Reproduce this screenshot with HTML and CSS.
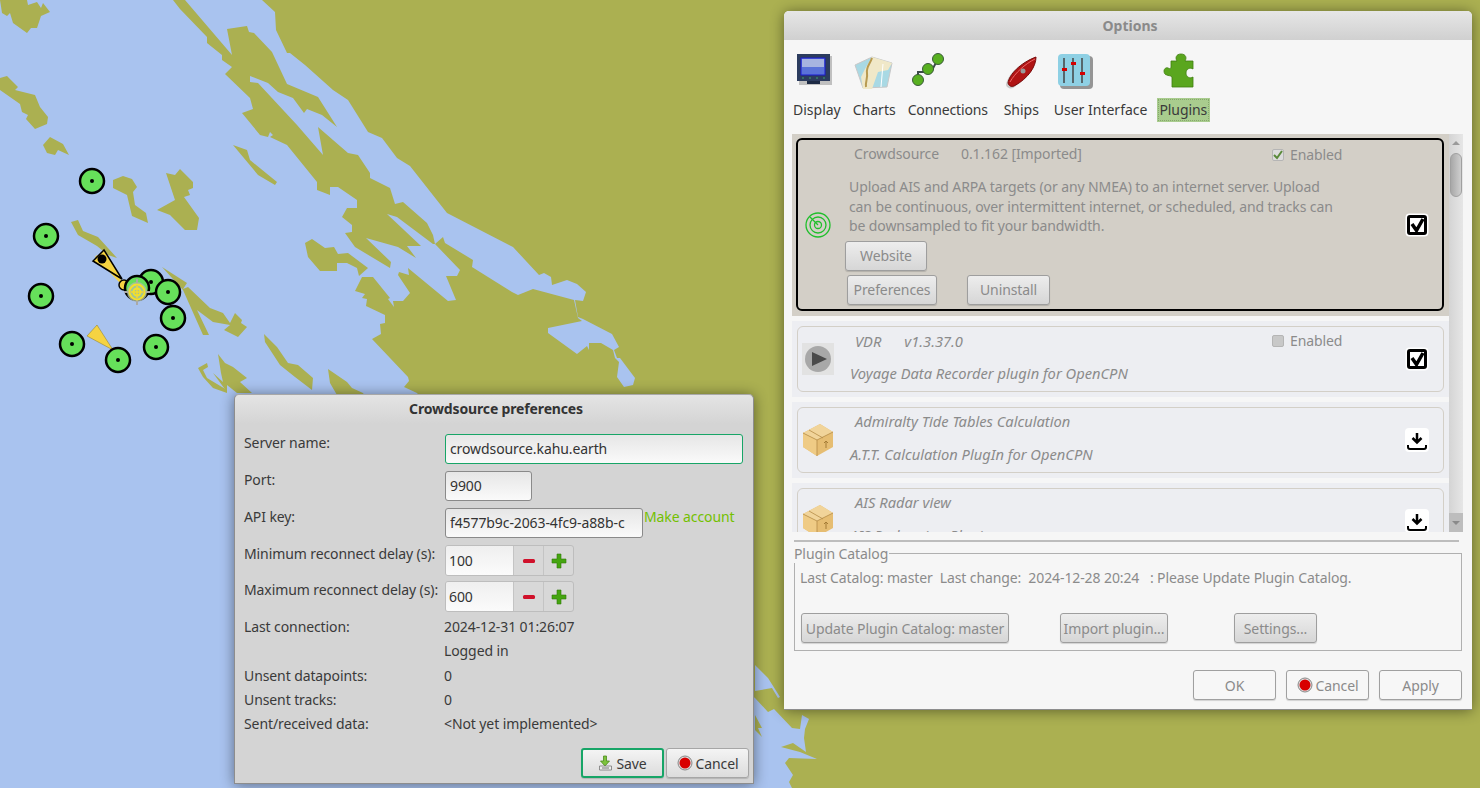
FILE: index.html
```html
<!DOCTYPE html>
<html lang="en">
<head>
  <meta charset="UTF-8" />
  <title>OpenCPN options</title>
  <link rel="stylesheet" href="styles.css">
</head>
<body>
  <!-- chart canvas -->
  <svg class="chart" width="1480" height="788" viewBox="0 0 1480 788">
    <g class="water">
      <polygon points="262,0 275,12 276,30 287,53 290,53 305,65 333,90 348,100 368,132 382,138 397,158 410,166 447,213 513,247 539,275 544,273 551,277 552,285 567,280 577,284 586,292 583,301 575,300 578,317 583,319 612,334 619,347 614,350 617,358 620,358 635,378 633,385 624,387 617,377 619,362 615,358 613,350 601,343 589,343 589,350 587,346 577,354 548,333 548,328 582,321 578,318 574,300 533,289 518,295 512,292 472,267 473,260 445,243 443,237 435,244 433,235 427,223 403,202 395,204 390,188 370,178 370,173 358,155 348,153 318,127 323,155 297,125 258,83 250,82 250,76 268,83 278,92 293,98 304,113 307,109 322,115 337,127 318,97 287,84 272,52 254,33 249,32 247,26 227,29 232,55 185,0" />
      <polygon points="0,0 173,0 180,9 207,37 207,43 222,55 222,60 232,67 225,74 250,98 253,109 242,113 260,135 268,137 270,132 273,135 270,137 287,145 317,182 317,190 330,195 330,187 338,187 357,200 357,208 347,208 342,217 352,225 352,232 345,233 355,247 390,268 391,262 366,238 398,247 416,258 407,246 421,246 387,214 397,217 433,244 435,244 460,270 457,276 446,276 456,300 448,301 408,268 409,275 399,272 398,275 410,293 403,301 393,301 394,307 388,299 390,298 373,277 362,277 355,291 365,294 362,298 367,299 366,306 385,315 385,323 380,324 381,334 372,339 408,377 409,381 404,387 417,393 500,500 755,698 768,712 774,709 792,728 800,729 802,715 809,719 805,729 804,738 806,752 793,743 781,747 800,752 817,759 789,758 785,763 793,775 789,782 792,788 0,788" />
      <polygon points="755,665 768,678 780,697 778,698 772,688 755,691" />
    </g>
    <g class="land">
      <polygon points="0,0 2,13 7,16 10,13 13,23 27,33 31,28 37,28 41,16 50,12 43,3 41,8 37,2 28,5 27,0" />
      <polygon points="0,78 7,76 18,87 15,90 35,95 40,107 48,117 47,124 35,129 26,119 28,115 22,112 20,104 0,90" />
      <polygon points="50,137 63,144 69,155 58,150 55,155 47,153 43,145" />
      <polygon points="113,180 123,176 132,179 137,187 133,192 135,205 146,213 148,223 132,216 127,195 113,188" />
      <polygon points="166,173 175,175 180,169 193,182 193,188 188,190 190,195 184,197 199,218 197,230 185,230 170,215 157,210 175,200" />
      <polygon points="233,145 247,150 250,160 277,182 275,185 258,175" />
      <polygon points="305,243 312,239 325,248 334,247 338,254 348,253 368,268 359,276 357,268 347,263 337,263 337,271 320,271 308,257" />
      <polygon points="71,222 78,220 83,231 98,237 117,258 108,255 97,246 78,235" />
      <polygon points="162,267 187,283 183,289 188,287 210,308 223,313 230,323 235,313 242,320 241,323 247,327 238,337 224,330 230,325 213,322 197,310 209,335 203,335 183,290" />
      <polygon points="264,334 277,347 288,363 298,365 313,378 312,390 295,377 280,365 265,342" />
      <polygon points="328,369 347,382 352,388 363,393 367,400 337,395 330,383" />
      <polygon points="218,354 225,363 233,367 247,378 240,382 252,393 237,393 227,385 227,392 213,373 223,382 221,373" />
      <polygon points="198,368 207,363 208,367 203,370 207,378 227,390 227,393 213,388 203,377" />
      <polygon points="755,715 762,728 758,728 762,737 755,730" />
    </g>
    <g class="boats">
      <line x1="96" y1="256" x2="124" y2="285" class="heading" />
      <polygon points="104,250 93,261 122,279" class="boat" />
      <circle cx="102" cy="259" r="4.5" />
      <circle cx="124" cy="285" r="5" class="boat" />
      <polygon points="97,325 87,336 113,350" class="boat thin" />
    </g>
    <g class="targets">
      <circle cx="151" cy="282" r="12" />
      <circle cx="137" cy="288" r="12" />
      <circle cx="168" cy="292" r="12" />
      <circle cx="92" cy="181" r="12" />
      <circle cx="46" cy="236" r="12" />
      <circle cx="41" cy="296" r="12" />
      <circle cx="72" cy="344" r="12" />
      <circle cx="118" cy="360" r="12" />
      <circle cx="156" cy="347" r="12" />
      <circle cx="173" cy="318" r="12" />
    </g>
    <g class="dots">
      <circle cx="151" cy="282" r="2" />
      <circle cx="168" cy="292" r="2" />
      <circle cx="92" cy="181" r="2" />
      <circle cx="46" cy="236" r="2" />
      <circle cx="41" cy="296" r="2" />
      <circle cx="72" cy="344" r="2" />
      <circle cx="118" cy="360" r="2" />
      <circle cx="156" cy="347" r="2" />
      <circle cx="173" cy="318" r="2" />
    </g>
    <g class="ownship">
      <circle cx="137" cy="292" r="10" class="halo" />
      <path d="M137 279v26M124 292h26" class="cross" />
      <circle cx="137" cy="292" r="7.5" class="ring" />
      <circle cx="137" cy="292" r="3.5" class="ring" />
      <path d="M137 286v12M131 292h12" class="ring thin-ring" />
    </g>
  </svg>

  <!-- preferences dialog -->
  <div class="window prefs">
    <div class="titlebar prefs-title">Crowdsource preferences</div>
    <div class="prefs-form">
      <label class="lbl">Server name:</label>
      <div class="input focus wide">crowdsource.kahu.earth</div>

      <label class="lbl">Port:</label>
      <div class="input port">9900</div>

      <label class="lbl">API key:</label>
      <div class="key-row">
        <div class="input key"><span class="clip">f4577b9c-2063-4fc9-a88b-c</span></div>
        <a class="link">Make account</a>
      </div>

      <label class="lbl">Minimum reconnect delay (s):</label>
      <div class="spin">
        <span class="spin-val">100</span>
        <span class="spin-btn"><svg width="14" height="14" viewBox="0 0 14 14"><rect x="1" y="5" width="12" height="4" rx="1.5" fill="#d0112b" /></svg></span>
        <span class="spin-btn"><svg width="16" height="16" viewBox="0 0 16 16"><path d="M6 1h4v5h5v4h-5v5H6v-5H1V6h5z" fill="#45a510" stroke="#2f7a08" stroke-width=".6" /></svg></span>
      </div>

      <label class="lbl">Maximum reconnect delay (s):</label>
      <div class="spin">
        <span class="spin-val">600</span>
        <span class="spin-btn"><svg width="14" height="14" viewBox="0 0 14 14"><rect x="1" y="5" width="12" height="4" rx="1.5" fill="#d0112b" /></svg></span>
        <span class="spin-btn"><svg width="16" height="16" viewBox="0 0 16 16"><path d="M6 1h4v5h5v4h-5v5H6v-5H1V6h5z" fill="#45a510" stroke="#2f7a08" stroke-width=".6" /></svg></span>
      </div>
    </div>
    <div class="prefs-info">
      <span>Last connection:</span><span>2024-12-31 01:26:07</span>
      <span></span><span>Logged in</span>
      <span>Unsent datapoints:</span><span>0</span>
      <span>Unsent tracks:</span><span>0</span>
      <span>Sent/received data:</span><span>&lt;Not yet implemented&gt;</span>
    </div>
    <div class="prefs-actions">
      <button class="btn focus-btn">
        <svg width="15" height="16" viewBox="0 0 15 16"><path d="M5.500 1h3v5h3L7 11 2.500 6h3z" fill="#7cc23c" stroke="#4b8a1c" stroke-width=".8" /><path d="M1.500 11h12v4h-12z" fill="#eee" stroke="#777" stroke-width=".8" /><path d="M4 13h7" stroke="#777" /></svg>
        Save
      </button>
      <button class="btn">
        <svg class="stop" width="16" height="16" viewBox="0 0 16 16"><circle cx="8" cy="8" r="7" fill="#ddd" stroke="#888" /><circle cx="8" cy="8" r="5.500" fill="#d80000" /></svg>
        Cancel
      </button>
    </div>
  </div>

  <!-- options dialog -->
  <div class="window options">
    <div class="titlebar options-title">Options</div>

    <div class="toolbar">
      <div class="tool tool-display">
        <svg width="38" height="38" viewBox="0 0 38 38">
          <rect x="3" y="3" width="33" height="29" fill="#8a8a8a" opacity=".5" />
          <rect x="1" y="1" width="33" height="27" fill="#2c3c5e" />
          <rect x="5" y="5" width="24" height="17" fill="#5a72d8" stroke="#1b1bd0" />
          <rect x="6" y="6" width="22" height="8" fill="#a7b4e0" />
          <path d="M6 25h2M13 25h2M20 25h2M27 25h2" stroke="#3fa06a" />
          <rect x="11" y="28" width="13" height="3" fill="#1d2a44" />
        </svg>
        <span>Display</span>
      </div>
      <div class="tool">
        <svg width="42" height="38" viewBox="0 0 42 38">
          <path d="M2 12 19 4l20 6-5 24-24 1z" fill="#a9d9e4" stroke="#c8c8c8" />
          <path d="M19 4l20 6-4 7-10 2-6 17h-9L8 24l4-8z" fill="#f0e8c8" />
          <path d="M19 5c-2 6-6 9-5 15s-2 9-1 14" stroke="#b89a50" fill="none" stroke-width="2" />
          <path d="M30 11 28 34" stroke="#fff" />
        </svg>
        <span>Charts</span>
      </div>
      <div class="tool tool-conn">
        <svg width="38" height="38" viewBox="0 0 38 38">
          <path d="M7 27v-8h13l7-13" stroke="#3c4a4a" stroke-width="2" fill="none" />
          <circle cx="7" cy="27" r="5.500" fill="#58b020" stroke="#3a5a3a" />
          <circle cx="17" cy="16" r="5.500" fill="#58b020" stroke="#3a5a3a" />
          <circle cx="27" cy="6" r="5.500" fill="#58b020" stroke="#3a5a3a" />
        </svg>
        <span>Connections</span>
      </div>
      <div class="tool tool-ships">
        <svg width="38" height="38" viewBox="0 0 38 38">
          <path d="M4 31C5 22 16 10 33 3c1 9-7 21-22 31-3 1-6 0-7-3z" fill="#aaa" opacity=".6" transform="translate(-1 1)" />
          <path d="M5 30C6 22 17 10 33 4c0 9-7 21-22 29-3 1-5 0-6-3z" fill="#b01414" stroke="#7a0a0a" />
          <path d="M7 29C12 20 22 11 32 6" stroke="#e66" fill="none" />
          <circle cx="20" cy="18" r="2.500" fill="#999" />
        </svg>
        <span>Ships</span>
      </div>
      <div class="tool tool-ui">
        <svg width="38" height="38" viewBox="0 0 38 38">
          <rect x="3" y="3" width="33" height="33" rx="4" fill="#555" opacity=".6" />
          <rect x="1" y="1" width="32" height="32" rx="4" fill="#8ed0e4" />
          <path d="M7 5v25M16 5v25M25 5v25" stroke="#444" stroke-width="1.500" />
          <rect x="5" y="15" width="5" height="3" fill="#d40000" />
          <rect x="14" y="9" width="5" height="3" fill="#d40000" />
          <rect x="23" y="19" width="5" height="3" fill="#d40000" />
        </svg>
        <span>User Interface</span>
      </div>
      <div class="tool tool-active">
        <svg width="38" height="38" viewBox="0 0 38 38">
          <path d="M8 8h6c-2-3-1-7 4-7s6 4 4 7h8v8c-3-2-7 0-7 4s4 6 7 4v10H9V24c-2-2-4-1-5-2-2 0-3-2-3-4s2-4 4-3c2 1 3 1 3-1z" fill="#5aa61e" stroke="#3f7d10" stroke-width=".8" />
        </svg>
        <span class="tool-label">Plugins</span>
      </div>
    </div>

    <div class="plugin-panel">
      <div class="plugin-list">
        <div class="band band-sel">
          <div class="card card-sel">
            <div class="card-icon radar">
              <svg width="28" height="28" viewBox="0 0 28 28" fill="none" stroke="#1fbf2b" stroke-width="1.300"><circle cx="14" cy="14" r="12" /><circle cx="14" cy="14" r="8" /><circle cx="14" cy="14" r="3.500" /><path d="M14 14 6 6" /></svg>
            </div>
            <div class="card-main">
              <div class="card-head">
                <span class="name">Crowdsource</span><span class="ver">0.1.162 [Imported]</span>
                <span class="enabled"><span class="cb on"><svg width="10" height="10" viewBox="0 0 10 10"><path d="M1 5l3 3 5-7" fill="none" stroke="#5a8a3a" stroke-width="2" /></svg></span>Enabled</span>
              </div>
              <p class="desc">Upload AIS and ARPA targets (or any NMEA) to an internet server. Upload can be continuous, over intermittent internet, or scheduled, and tracks can be downsampled to fit your bandwidth.</p>
              <div class="card-btns">
                <button class="btn dim web">Website</button>
              </div>
              <div class="card-btns second">
                <button class="btn dim pref">Preferences</button>
                <button class="btn dim uninstall">Uninstall</button>
              </div>
            </div>
            <div class="card-act">
              <span class="check-icon"><svg width="24" height="24" viewBox="0 0 24 24"><rect x=".5" y=".5" width="23" height="23" rx="4" fill="#fff" /><rect x="3.500" y="3.500" width="17" height="17" rx="1.500" fill="#fff" stroke="#000" stroke-width="3" /><path d="M7 11l4.500 6.500L18 6" fill="none" stroke="#000" stroke-width="3.500" /></svg></span>
            </div>
          </div>
        </div>

        <div class="band">
          <div class="card">
            <div class="card-icon">
              <svg width="32" height="32" viewBox="0 0 32 32"><rect width="32" height="32" fill="#e2e2e2" /><circle cx="16" cy="16" r="13" fill="#a8a8a8" /><path d="M10 9l15 7-15 7z" fill="#4a4a4a" /></svg>
            </div>
            <div class="card-main">
              <div class="card-head italic">
                <span class="name">VDR</span><span class="ver short">v1.3.37.0</span>
                <span class="enabled upright"><span class="cb"></span>Enabled</span>
              </div>
              <p class="desc italic one">Voyage Data Recorder plugin for OpenCPN</p>
            </div>
            <div class="card-act">
              <span class="check-icon"><svg width="24" height="24" viewBox="0 0 24 24"><rect x=".5" y=".5" width="23" height="23" rx="4" fill="#fff" /><rect x="3.500" y="3.500" width="17" height="17" rx="1.500" fill="#fff" stroke="#000" stroke-width="3" /><path d="M7 11l4.500 6.500L18 6" fill="none" stroke="#000" stroke-width="3.500" /></svg></span>
            </div>
          </div>
        </div>

        <div class="band">
          <div class="card">
            <div class="card-icon">
              <svg width="32" height="34" viewBox="0 0 32 34"><path d="M1 10 18 1l13 8v15L15 33 1 24z" fill="#e6bd72" /><path d="M1 10l14 7v16L1 24z" fill="#efcb85" /><path d="M1 10 18 1l13 8-16 8z" fill="#f1d49a" /><path d="M7 7l14 8M1 10l14 7 16-8M15 17v16" fill="none" stroke="#b48c46" stroke-width=".8" /><path d="M22 20l2-2 2 2M24 18v7" stroke="#a57c36" fill="none" /></svg>
            </div>
            <div class="card-main">
              <div class="card-head italic plain"><span class="name">Admiralty Tide Tables Calculation</span></div>
              <p class="desc italic one">A.T.T. Calculation PlugIn for OpenCPN</p>
            </div>
            <div class="card-act">
              <span class="dl-icon"><svg width="24" height="24" viewBox="0 0 24 24"><rect width="24" height="24" rx="4" fill="#fff" /><path d="M12 5v9M7.500 10l4.500 4.500 4.500-4.500" fill="none" stroke="#000" stroke-width="2.500" /><path d="M3 17v2c0 1 1 2 2 2h14c1 0 2-1 2-2v-2" fill="none" stroke="#000" stroke-width="2" /></svg></span>
            </div>
          </div>
        </div>

        <div class="band">
          <div class="card">
            <div class="card-icon">
              <svg width="32" height="34" viewBox="0 0 32 34"><path d="M1 10 18 1l13 8v15L15 33 1 24z" fill="#e6bd72" /><path d="M1 10l14 7v16L1 24z" fill="#efcb85" /><path d="M1 10 18 1l13 8-16 8z" fill="#f1d49a" /><path d="M7 7l14 8M1 10l14 7 16-8M15 17v16" fill="none" stroke="#b48c46" stroke-width=".8" /><path d="M22 20l2-2 2 2M24 18v7" stroke="#a57c36" fill="none" /></svg>
            </div>
            <div class="card-main">
              <div class="card-head italic plain"><span class="name">AIS Radar view</span></div>
              <p class="desc italic one">AIS Radar view Plugin</p>
            </div>
            <div class="card-act">
              <span class="dl-icon"><svg width="24" height="24" viewBox="0 0 24 24"><rect width="24" height="24" rx="4" fill="#fff" /><path d="M12 5v9M7.500 10l4.500 4.500 4.500-4.500" fill="none" stroke="#000" stroke-width="2.500" /><path d="M3 17v2c0 1 1 2 2 2h14c1 0 2-1 2-2v-2" fill="none" stroke="#000" stroke-width="2" /></svg></span>
            </div>
          </div>
        </div>
      </div>
      <div class="scrollbar">
        <span class="arrow up"></span>
        <span class="thumb"></span>
        <span class="arrow-box"><span class="arrow down"></span></span>
      </div>
    </div>

    <div class="separator"></div>

    <fieldset class="catalog">
      <legend>Plugin Catalog</legend>
      <div class="catalog-text">Last Catalog: master&nbsp; Last change:&nbsp; 2024-12-28 20:24&nbsp;&nbsp; : Please Update Plugin Catalog.</div>
      <div class="catalog-btns">
        <button class="btn dim b-update">Update Plugin Catalog: master</button>
        <button class="btn dim b-import">Import plugin...</button>
        <button class="btn dim b-settings">Settings...</button>
      </div>
    </fieldset>

    <div class="options-actions">
      <button class="btn light">OK</button>
      <button class="btn light">
        <svg class="stop" width="16" height="16" viewBox="0 0 16 16"><circle cx="8" cy="8" r="7" fill="#ddd" stroke="#888" /><circle cx="8" cy="8" r="5.500" fill="#d80000" /></svg>
        Cancel
      </button>
      <button class="btn light">Apply</button>
    </div>
  </div>
</body>
</html>
```

FILE: styles.css
```css
html, body {
  margin: 0;
  padding: 0;
  height: 100%;
  overflow: hidden;
}
body {
  font-family: "Noto Sans", sans-serif;
  font-size: 14px;
  letter-spacing: -0.1px;
  background: #abb051;
  color: #3a3a3a;
}

/* chart */
.chart {
  position: absolute;
  left: 0;
  top: 0;
}
.water polygon { fill: #a9c3ef; }
.land polygon { fill: #abb051; }
.boats circle { fill: #000; }
.boats .boat { fill: #f5d342; stroke: #000; stroke-width: 1.5; }
.boats .thin { stroke: #8a7a20; stroke-width: .5; }
.heading { stroke: #f5d342; stroke-width: 3; }
.targets circle { fill: #66e05a; stroke: #000; stroke-width: 2.500; }
.dots circle { fill: #000; }
.ownship .halo { fill: #b0bda8; opacity: .8; }
.ownship .cross { stroke: #a9a9a9; stroke-width: 2; fill: none; }
.ownship .ring { stroke: #f2e02c; stroke-width: 2; fill: none; }
.ownship .thin-ring { stroke-width: 1.5; }

/* windows */
.window {
  position: absolute;
  box-shadow: 0 1px 14px rgba(0,0,0,0.45);
  border-radius: 5px 5px 0 0;
  box-sizing: border-box;
}
.titlebar {
  text-align: center;
  font-weight: bold;
  background: linear-gradient(#e6e6e6, #d0d0d0);
  border-radius: 5px 5px 0 0;
  box-sizing: border-box;
}
.btn {
  font: inherit;
  letter-spacing: inherit;
  color: #3a3a3a;
  height: 30px;
  box-sizing: border-box;
  border: 1px solid #a6a6a6;
  border-radius: 3px;
  background: linear-gradient(#f4f4f4, #dcdcdc);
  padding: 0;
  display: inline-flex;
  align-items: center;
  justify-content: center;
  gap: 3px;
  box-shadow: 0 1px 1px rgba(0,0,0,0.15);
}
.btn.dim {
  color: #8b8b8b;
  border-color: #9e9e9e;
  background: linear-gradient(#ededed, #d6d6d6);
}
.btn.light {
  color: #8b8b8b;
  width: 83px;
  background: #f7f7f7;
  border-color: #a0a0a0;
}
.stop { flex: none; }

/* preferences */
.prefs {
  left: 234px;
  top: 394px;
  width: 520px;
  height: 390px;
  background: #d4d4d4;
  border: 1px solid #8d8d8d;
  border-top-color: #a8a8a8;
}
.prefs-title {
  height: 29px;
  line-height: 27px;
  padding-left: 4px;
  color: #333;
  letter-spacing: -0.15px;
  background: linear-gradient(#e4e4e4, #d4d4d4);
}
.prefs-form {
  display: grid;
  grid-template-columns: 201px 1fr;
  row-gap: 7px;
  padding: 10px 10px 0 9px;
}
.lbl {
  line-height: 18px;
  color: #3a3a3a;
  white-space: nowrap;
}
.input {
  box-sizing: border-box;
  height: 30px;
  line-height: 28px;
  padding-left: 4px;
  border: 1px solid #8a8a8a;
  border-radius: 3px;
  background: linear-gradient(#e6e6e6, #fafafa);
  color: #333;
}
.input.wide { width: 298px; }
.input.port { width: 87px; }
.input.key { width: 198px; overflow: hidden; }
.clip {
  display: block;
  width: 188px;
  overflow: hidden;
  white-space: nowrap;
}
.input.focus {
  border-color: #17a567;
}
.key-row {
  display: flex;
  align-items: flex-start;
}
.link {
  color: #73c000;
  line-height: 18px;
  margin-left: 1px;
}
.spin {
  display: flex;
  width: 129px;
  height: 31px;
  margin-bottom: -2px;
  box-sizing: border-box;
  border: 1px solid #bdbdbd;
  border-radius: 3px;
  background: #d8d8d8;
  overflow: hidden;
}
.spin-val {
  width: 67px;
  box-sizing: border-box;
  padding-left: 3px;
  line-height: 29px;
  background: linear-gradient(#efefef, #fbfbfb);
  color: #333;
  flex: none;
}
.spin-btn {
  flex: 1;
  display: flex;
  align-items: center;
  justify-content: center;
  border-left: 1px solid #c4c4c4;
}
.prefs-info {
  display: grid;
  grid-template-columns: 200px 1fr;
  grid-auto-rows: 24.300px;
  line-height: 24px;
  padding: 5px 0 0 9px;
}
.prefs-actions {
  display: flex;
  justify-content: flex-end;
  gap: 2px;
  padding: 12px 4px 0 0;
}
.prefs-actions .btn { width: 83px; }
.focus-btn { border: 2px solid #17a567; }

/* options */
.options {
  left: 784px;
  top: 11px;
  width: 688px;
  height: 699px;
  background: #f6f6f6;
  border-bottom: 1px solid #8d8d8d;
}
.options-title {
  height: 29px;
  line-height: 29px;
  padding-left: 4px;
  letter-spacing: 0;
  color: #8a8a8a;
}
.toolbar {
  display: flex;
  height: 94px;
  box-sizing: border-box;
  padding: 13px 0 0 9px;
  gap: 12px;
  letter-spacing: 0;
}
.tool {
  display: flex;
  flex-direction: column;
  align-items: center;
  color: #3a3a3a;
  white-space: nowrap;
}
.tool svg { height: 38px; flex: none; }
.tool span { margin-top: 9px; line-height: 20px; }
.tool-display svg { margin-right: 4px; }
.tool-conn svg { align-self: flex-start; margin-left: 3px; }
.tool-conn span { letter-spacing: -0.15px; }
.tool-ships { margin-left: 4px; margin-right: 3px; width: 35px; }
.tool-ships svg { align-self: flex-start; margin-left: -1px; }
.tool-ui svg { align-self: flex-start; margin-left: 3px; }
.tool-active { margin-left: -2px; }
.tool-active svg { align-self: flex-start; margin-left: 6px; }
.tool-active .tool-label {
  background: #a9cc8e;
  padding: 2px 3px 2px 2px;
  margin-top: 7px;
  letter-spacing: -0.1px;
  outline: 1px dotted #86a86c;
  outline-offset: -2px;
}

.plugin-panel {
  display: flex;
  margin-left: 8px;
  width: 671px;
  height: 398px;
}
.plugin-list {
  width: 657px;
  height: 398px;
  overflow: hidden;
  display: flex;
  flex-direction: column;
  gap: 5px;
}
.band {
  flex: none;
  background: #edeef2;
  padding: 5px;
}
.band-sel {
  background: #d3cfc7;
  padding: 4px 5px 5px 4px;
}
.card {
  box-sizing: border-box;
  display: flex;
  height: 66px;
  border: 1px solid #d3cfc7;
  border-radius: 6px;
  color: #8b8b8b;
}
.card-sel {
  height: 173px;
  border: 2px solid #000;
  border-radius: 6px;
}
.card-icon {
  width: 51px;
  flex: none;
  box-sizing: border-box;
  padding: 0 0 0 4px;
  display: flex;
  align-items: center;
}
.radar { padding-left: 6px; }
.card-main {
  flex: 1;
  min-width: 0;
}
.card-head {
  display: flex;
  padding: 4px 0 0 5px;
  line-height: 20px;
}
.card-head .ver { margin-left: 22px; }
.card-head .ver.short { margin-left: 23px; }
.italic {
  font-style: italic;
  font-size: 14.700px;
  letter-spacing: 0;
}
.card-head.italic { padding-left: 6px; }
.card-head.plain { padding-top: 3px; }
.card-head.plain + .desc { margin-top: 14px; }
.enabled {
  margin-left: auto;
  margin-right: 21px;
  display: flex;
  align-items: center;
  gap: 6px;
  width: 95px;
  box-sizing: border-box;
  padding-top: 1px;
}
.upright {
  font-style: normal;
  font-size: 14px;
  letter-spacing: -0.1px;
  padding-top: 0;
  margin-right: 22px;
}
.cb {
  width: 12px;
  height: 12px;
  box-sizing: border-box;
  border: 1px solid #b5b5b5;
  border-radius: 2px;
  background: #c8c8c8;
  display: inline-flex;
  align-items: center;
  justify-content: center;
}
.cb.on { background: #dcdcdc; }
.desc {
  margin: 12px 0 0 0;
  width: 490px;
  line-height: 19.500px;
}
.desc.one { margin-top: 13px; padding-left: 1px; white-space: nowrap; }
.card-btns {
  display: flex;
  margin-top: 5px;
  margin-left: -4px;
}
.card-btns.second { margin-top: 4px; margin-left: -2px; }
.web { width: 82px; }
.pref { width: 90px; }
.uninstall { width: 83px; margin-left: 30px; }
.card-act {
  width: 54px;
  flex: none;
  display: flex;
  align-items: center;
  justify-content: flex-start;
  padding-left: 16px;
  box-sizing: border-box;
}
.card-sel .card-act { padding-left: 17px; }
.check-icon, .dl-icon { display: flex; }

.scrollbar {
  width: 14px;
  height: 398px;
  box-sizing: border-box;
  background: linear-gradient(90deg, #d4d4d4, #e6e6e6);
  display: flex;
  flex-direction: column;
  align-items: center;
}
.arrow {
  width: 0;
  height: 0;
  border-left: 4px solid transparent;
  border-right: 4px solid transparent;
}
.arrow.up {
  border-bottom: 4px solid #9a9a9a;
  margin-top: 7px;
}
.thumb {
  width: 12px;
  height: 44px;
  margin-top: 8px;
  border-radius: 6px;
  border: 1px solid #a0a0a0;
  box-sizing: border-box;
  background: linear-gradient(90deg, #a8a8a8, #cfcfcf);
}
.arrow-box {
  margin-top: auto;
  width: 14px;
  height: 19px;
  background: #bdbdbd;
  display: flex;
  align-items: center;
  justify-content: center;
}
.arrow.down { border-top: 4px solid #8a8a8a; }

.separator {
  margin: 8px 0 0 10px;
  width: 665px;
  height: 2px;
  background: #bdbdbd;
}
.catalog {
  margin: 2px 0 0 10px;
  width: 668px;
  height: 107px;
  padding: 0 0 0 5px;
  box-sizing: border-box;
  border: 1px solid #b0b0b0;
  color: #8b8b8b;
}
.catalog legend {
  padding: 0 1px 0 0;
  margin-left: -6px;
  line-height: 19px;
}
.catalog-text { line-height: 20px; padding-top: 5px; }
.catalog-btns {
  display: flex;
  margin-top: 25px;
  margin-left: 1px;
}
.b-update { width: 208px; }
.b-import { width: 108px; margin-left: 51px; }
.b-settings { width: 83px; margin-left: 66px; }
.options-actions {
  display: flex;
  justify-content: flex-end;
  gap: 10px;
  padding: 19px 10px 0 0;
}
```
